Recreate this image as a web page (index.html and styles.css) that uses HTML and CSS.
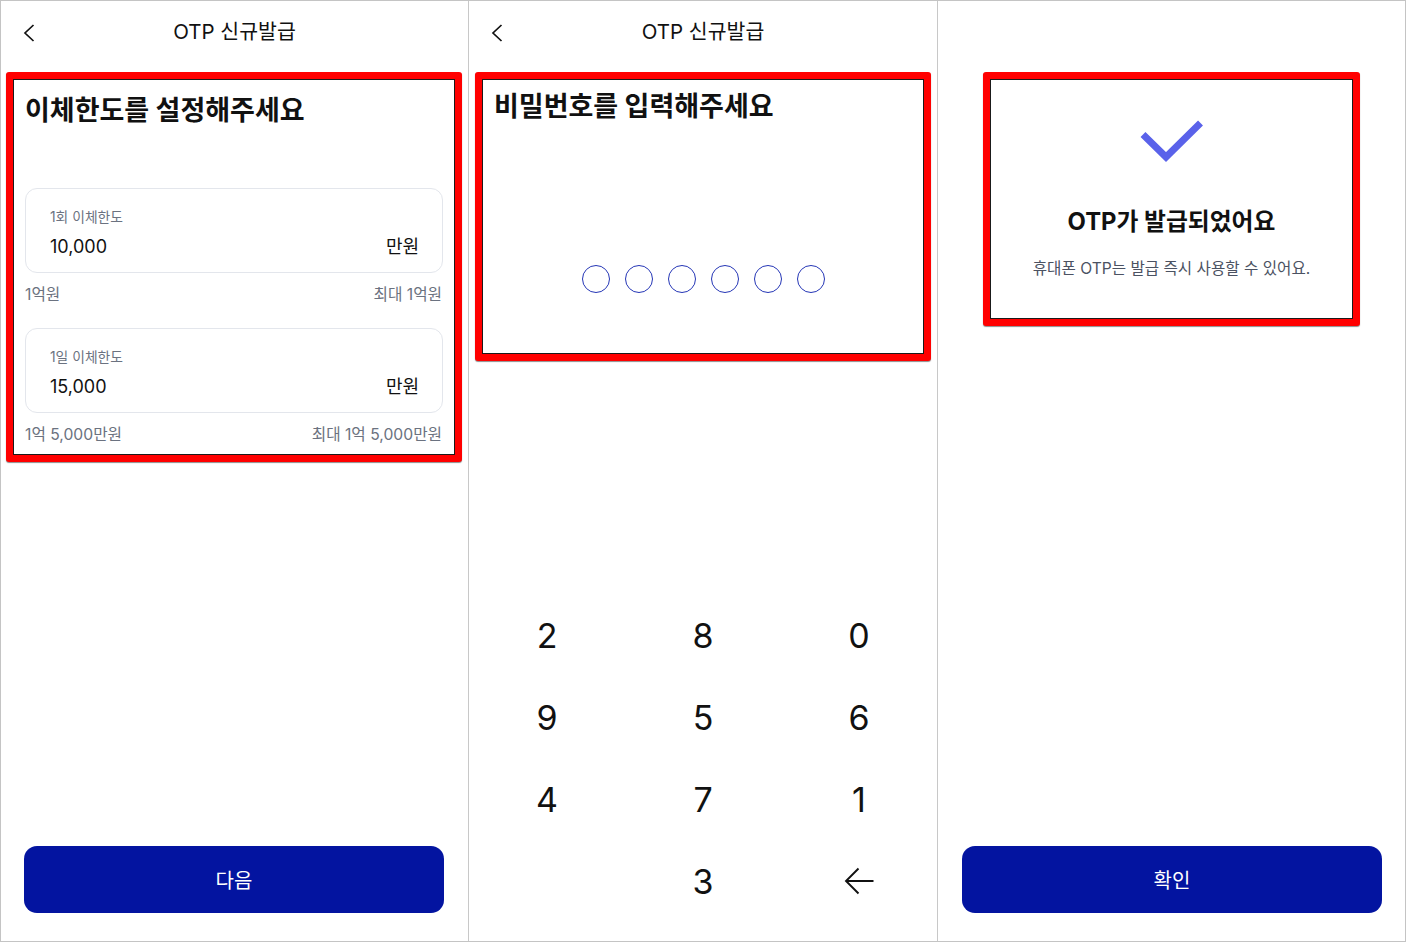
FILE: index.html
```html
<!DOCTYPE html>
<html lang="ko">
<head>
<meta charset="utf-8">
<title>OTP 신규발급</title>
<link rel="stylesheet" href="styles.css">
</head>
<body>
<div class="frame">
  <section class="panel panel-a">
    <header class="hdr">
      <span class="back"><svg width="12" height="18" viewBox="0 0 12 18"><path d="M10.5 1 L2 9 L10.5 17" fill="none" stroke="#111" stroke-width="1.7"/></svg></span>
      <h1 class="hdr-title">OTP 신규발급</h1>
      <span></span>
    </header>
    <div class="mark mark-a">
      <h2 class="title">이체한도를 설정해주세요</h2>
      <div class="card first">
        <div class="label">1회 이체한도</div>
        <div class="value-row"><span>10,000</span><span>만원</span></div>
      </div>
      <div class="hint-row"><span>1억원</span><span>최대 1억원</span></div>
      <div class="card second">
        <div class="label">1일 이체한도</div>
        <div class="value-row"><span>15,000</span><span>만원</span></div>
      </div>
      <div class="hint-row"><span>1억 5,000만원</span><span>최대 1억 5,000만원</span></div>
    </div>
    <div class="grow"></div>
    <button class="cta">다음</button>
  </section>

  <section class="panel panel-b">
    <header class="hdr">
      <span class="back"><svg width="12" height="18" viewBox="0 0 12 18"><path d="M10.5 1 L2 9 L10.5 17" fill="none" stroke="#111" stroke-width="1.7"/></svg></span>
      <h1 class="hdr-title">OTP 신규발급</h1>
      <span></span>
    </header>
    <div class="mark mark-b">
      <h2 class="title">비밀번호를 입력해주세요</h2>
      <div class="dots">
        <span class="dot"></span><span class="dot"></span><span class="dot"></span>
        <span class="dot"></span><span class="dot"></span><span class="dot"></span>
      </div>
    </div>
    <div class="grow"></div>
    <div class="keypad">
      <span class="key">2</span><span class="key">8</span><span class="key">0</span>
      <span class="key">9</span><span class="key">5</span><span class="key">6</span>
      <span class="key">4</span><span class="key">7</span><span class="key">1</span>
      <span class="key"></span><span class="key">3</span>
      <span class="key"><svg width="32" height="28" viewBox="0 0 32 28"><path d="M30.5 14 H3 M15.5 1.5 L3 14 L15.5 26.5" fill="none" stroke="#111" stroke-width="1.9"/></svg></span>
    </div>
  </section>

  <section class="panel panel-c">
    <header class="hdr"></header>
    <div class="mark mark-c">
      <svg class="check" width="64" height="46" viewBox="0 0 64 46"><path d="M3 15.5 L26 38 L60.5 4" fill="none" stroke="#5a62ea" stroke-width="7"/></svg>
      <h2 class="done-title">OTP가 발급되었어요</h2>
      <p class="done-sub">휴대폰 OTP는 발급 즉시 사용할 수 있어요.</p>
    </div>
    <div class="grow"></div>
    <button class="cta">확인</button>
  </section>
</div>
</body>
</html>
```

FILE: styles.css
```css
* { box-sizing: border-box; }
html, body { margin: 0; padding: 0; background: #fff; }
body {
  font-family: Inter, "Noto Sans CJK KR", sans-serif;
  color: #111;
}
.frame {
  width: 1406px;
  height: 942px;
  border: 1px solid #c4c4c4;
  display: flex;
}
.panel {
  display: flex;
  flex-direction: column;
  height: 940px;
}
.panel-a { width: 467px; }
.panel-b { width: 469px; border-left: 1px solid #c8c8c8; }
.panel-c { width: 468px; border-left: 1px solid #c8c8c8; }

.hdr {
  height: 62px;
  flex: none;
  display: grid;
  grid-template-columns: 1fr auto 1fr;
  align-items: center;
}
.back { padding-left: 22px; display: flex; align-items: center; padding-top: 1px; }
.hdr-title {
  margin: 0;
  font-size: 20.5px;
  font-weight: 400;
  line-height: 28px;
  color: #111;
}

.mark {
  flex: none;
  border: 7px solid #ff0000;
  border-radius: 3px;
  box-shadow: inset 0 0 0 1px #1a1a1a, 0 1px 1px rgba(0, 0, 0, 0.45);
  background: #fff;
}
.mark-a { margin: 9px 6px 0 5px; padding: 14px 12px 9px; }
.mark-b { margin: 9px 6px 0 6px; padding: 10px 12px 61px; }
.mark-c {
  margin: 9px 45px 0 45px;
  padding: 40px 12px 39px;
  display: flex;
  flex-direction: column;
  align-items: center;
}

.title {
  margin: 0;
  font-size: 27px;
  line-height: 36px;
  font-weight: 700;
  color: #111;
}

.card {
  border: 1px solid #e3e6ec;
  border-radius: 12px;
  padding: 19px 23px 12px 24px;
}
.card.first { margin-top: 59px; }
.card.second { margin-top: 22px; }
.label {
  font-size: 13.8px;
  line-height: 18px;
  color: #6b7280;
}
.value-row {
  margin-top: 8px;
  display: flex;
  justify-content: space-between;
  font-size: 18px;
  line-height: 26px;
  color: #111;
}
.hint-row {
  margin-top: 11px;
  display: flex;
  justify-content: space-between;
  padding-right: 1px;
  font-size: 15.7px;
  line-height: 22px;
  color: #6b7280;
}

.dots {
  margin-top: 140px;
  display: flex;
  justify-content: center;
  gap: 15px;
}
.dot {
  width: 28px;
  height: 28px;
  border: 1.5px solid #2536b6;
  border-radius: 50%;
}

.grow { flex: 1; }

.keypad {
  flex: none;
  display: grid;
  grid-template-columns: repeat(3, 156px);
  grid-auto-rows: 82px;
  margin-bottom: 19px;
}
.key {
  display: flex;
  align-items: center;
  justify-content: center;
  font-size: 34px;
  font-weight: 400;
  color: #111;
}

.check { display: block; }
.done-title {
  margin: 41px 0 0;
  font-size: 23.8px;
  line-height: 32px;
  font-weight: 700;
  color: #111;
}
.done-sub {
  margin: 20px 0 0;
  font-size: 15.6px;
  line-height: 22px;
  color: #4b5262;
}

.cta {
  flex: none;
  width: 420px;
  height: 67px;
  margin: 0 0 28px 23px;
  border: none;
  border-radius: 13px;
  background: #0314a0;
  color: #fff;
  font-family: Inter, "Noto Sans CJK KR", sans-serif;
  font-size: 20px;
  font-weight: 400;
}
.panel-c .cta { margin-left: 24px; }
```
